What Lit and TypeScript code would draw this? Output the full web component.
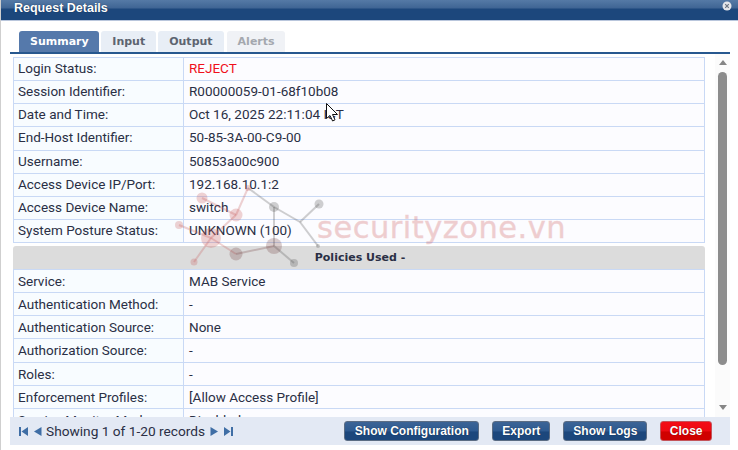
import { LitElement, html, css, svg } from "lit";
import { customElement } from "lit/decorators.js";

const first: [string, string, boolean?][] = [
  ["Login Status:", "REJECT", true],
  ["Session Identifier:", "R00000059-01-68f10b08"],
  ["Date and Time:", "Oct 16, 2025 22:11:04 ICT"],
  ["End-Host Identifier:", "50-85-3A-00-C9-00"],
  ["Username:", "50853a00c900"],
  ["Access Device IP/Port:", "192.168.10.1:2"],
  ["Access Device Name:", "switch"],
  ["System Posture Status:", "UNKNOWN (100)"],
];
const second: [string, string][] = [
  ["Service:", "MAB Service"],
  ["Authentication Method:", "-"],
  ["Authentication Source:", "None"],
  ["Authorization Source:", "-"],
  ["Roles:", "-"],
  ["Enforcement Profiles:", "[Allow Access Profile]"],
  ["Service Monitor Mode:", "Disabled"],
];

const nodes: [number, number, number, string][] = [
  [202, 198, 5.5, "p"], [236, 215, 6.5, "p"], [248, 188, 3, "p"], [274, 207, 5, "g"],
  [319, 204, 4.5, "g"], [318, 246, 2, "g"], [274, 246, 8, "b"], [236, 254, 6.5, "b"],
  [294, 263, 4, "g"], [194, 262, 3.5, "p"], [211, 238, 10, "p"], [179, 225, 4, "p"],
];
const edges: [number, number, number, number, string][] = [
  [202, 198, 236, 215, "p"], [236, 215, 248, 188, "p"], [248, 188, 274, 207, "g"],
  [274, 207, 300, 222, "g"], [274, 207, 274, 246, "g"], [300, 222, 319, 204, "g"],
  [300, 222, 318, 246, "g"], [236, 215, 211, 238, "p"], [179, 225, 211, 238, "p"],
  [211, 238, 194, 262, "p"], [211, 238, 236, 254, "p"], [236, 254, 274, 246, "b"],
  [274, 246, 294, 263, "g"],
];

@customElement("app-root")
export class AppRoot extends LitElement {
  static styles = css`
    :host { display: block; width: 738px; height: 450px; overflow: hidden; position: relative; background: #fff;
      font-family: Roboto, sans-serif; font-size: 13.5px; color: #2a2f45; }
    .dialog { display: flex; flex-direction: column; height: 450px; box-sizing: border-box; border-left: 1px solid #cfcfcf; }
    .title { height: 21px; box-sizing: border-box; flex: none; display: flex; align-items: flex-start; justify-content: space-between;
      background: linear-gradient(#557aa6 0, #3f6594 8px, #1c477c 9px, #1c477c 100%); border-bottom: 1px solid #b9c6dc;
      padding: 1px 6px 0 13px; color: #fff; font: bold 12.5px/14px "Liberation Sans", sans-serif; text-shadow: 0 0 1px #0a2340; }
    .x { display: block; }
    .main { flex: 1; display: flex; flex-direction: column; padding: 10px 8px 5px 9px; min-height: 0; }
    .tabs { display: flex; gap: 2px; padding-left: 9px; border-bottom: 2px solid #27588f; height: 21px; flex: none; }
    .tab { height: 21px; box-sizing: border-box; padding: 0 11px; border-radius: 3px 3px 0 0; background: #e8eef6; color: #5d6470;
      font: bold 11px/21px "DejaVu Sans", sans-serif; }
    .tab.on { background: #5579ab; color: #fff; padding-right: 10.6px; }
    .tab.off { background: #f0f2f6; color: #a4a8ae; margin-left: 1px; padding-right: 10.5px; }
    .content { flex: 1; min-height: 0; display: flex; overflow: hidden; background: #fff; }
    .sheet { width: 692px; margin: 3px 0 0 3px; flex: none; }
    .block { border-top: 1px solid #c9d9f5; border-left: 1px solid #c9d9f5; border-right: 1px solid #c9d9f5; margin-bottom: 3px; }
    .block.low { border-top: 0; }
    .block.low .row { line-height: 22px; }
    .row { display: grid; grid-template-columns: 170px 1fr; height: 23.125px; box-sizing: border-box; border-bottom: 1px solid #c9d9f5; line-height: 20px; }
    .l { background: #f8fcff; padding-left: 4px; border-right: 1px solid #c9d9f5; white-space: nowrap; }
    .v { background: #fcfcff; padding-left: 5px; white-space: nowrap; }
    .red { color: #f0101c; }
    .head { height: 24px; background: #dcdcdc; border-radius: 3px 3px 0 0; text-align: center; font: bold 11px/24px "DejaVu Sans", sans-serif;
      border-bottom: 1px solid #c9d9f5; box-sizing: border-box; color: #2a2f45; padding-left: 2px; }
    .bar { margin-left: 10px; width: 15px; flex: none; background: #fbfbfb; display: flex; flex-direction: column; align-items: center; }
    .up { width: 0; height: 0; border: 4.5px solid transparent; border-top: 0; border-bottom: 5px solid #858585; margin-top: 6px; }
    .thumb { width: 9px; height: 293px; border-radius: 5px; background: #8c8c8c; margin-top: 7px; }
    .down { width: 0; height: 0; border: 4.5px solid transparent; border-bottom: 0; border-top: 5px solid #858585; margin-top: 40px; }
    .foot { height: 28px; flex: none; background: #e3e9f4; display: flex; align-items: center; justify-content: space-between; padding: 0 18px 0 9px; }
    .pager { display: flex; align-items: center; gap: 4px; font-size: 13.7px; }
    .pager svg { display: block; }
    .gap1 { margin-left: 1px; }
    .gap2 { margin-left: 2px; }
    .btns { display: flex; gap: 13px; }
    .btn { height: 20px; box-sizing: border-box; border: 1px solid #5c6d84; border-radius: 3px; padding: 0 9px; color: #fff;
      font: bold 12px/18px "Liberation Sans", sans-serif; background: linear-gradient(#3c6496 0, #2e5a90 50%, #1c477c 55%, #1c477c 100%); text-shadow: 0 0 1px #0a2340; }
    .btn.wide { padding: 0 9.5px; }
    .btn.close { background: linear-gradient(#f30d17 0, #ee0a12 50%, #d00000 55%, #d00000 100%); border-color: #c4545a; padding: 0 8.5px; text-shadow: 0 0 1px #700; }
    .mark { position: absolute; left: 0; top: 0; width: 738px; height: 450px; pointer-events: none; }
    .mark text { font-family: "DejaVu Sans", sans-serif; font-size: 30.5px; letter-spacing: .5px; fill: #c84a4a; opacity: .26; stroke: #c84a4a; stroke-width: .4px; }
  `;

  private rows(list: [string, string, boolean?][]) {
    return list.map(([k, v, red]) => html`<div class="row"><div class="l">${k}</div><div class="v ${red ? "red" : ""}">${v}</div></div>`);
  }

  render() {
    const col: Record<string, string> = { p: "#c86060", g: "#555555", b: "#7a4a4a" };
    return html`
      <div class="dialog">
        <div class="title">
          <span>Request Details</span>
          <svg class="x" width="10" height="10" viewBox="0 0 10 10"><circle cx="5" cy="5" r="4.5" fill="#e4e6ea"/><path d="M3.2 3.2l3.6 3.6M6.8 3.2l-3.6 3.6" stroke="#6b7480" stroke-width="1.2"/></svg>
        </div>
        <div class="main">
          <div class="tabs">
            <div class="tab on">Summary</div><div class="tab">Input</div><div class="tab">Output</div><div class="tab off">Alerts</div>
          </div>
          <div class="content">
            <div class="sheet">
              <div class="block">${this.rows(first)}</div>
              <div class="head">Policies Used -</div>
              <div class="block low">${this.rows(second)}</div>
            </div>
            <div class="bar"><div class="up"></div><div class="thumb"></div><div class="down"></div></div>
          </div>
          <div class="foot">
            <div class="pager">
              <svg width="9" height="9" viewBox="0 0 9 9"><path d="M0 0h2v9H0zM9 0v9L2.5 4.5z" fill="#3f6ea5"/></svg>
              <svg class="gap2" width="8" height="9" viewBox="0 0 8 9"><path d="M7.5 0v9L0 4.5z" fill="#3f6ea5"/></svg>
              <span>Showing 1 of 1-20 records</span>
              <svg class="gap1" width="8" height="9" viewBox="0 0 8 9"><path d="M.5 0v9L8 4.5z" fill="#3f6ea5"/></svg>
              <svg class="gap2" width="9" height="9" viewBox="0 0 9 9"><path d="M9 0H7v9h2zM0 0v9l6.5-4.5z" fill="#3f6ea5"/></svg>
            </div>
            <div class="btns">
              <div class="btn wide">Show Configuration</div><div class="btn">Export</div><div class="btn">Show Logs</div><div class="btn close">Close</div>
            </div>
          </div>
        </div>
      </div>
      <svg class="mark" viewBox="0 0 738 450">
        ${edges.map(([a, b, c, d, k]) => svg`<line x1=${a} y1=${b} x2=${c} y2=${d} stroke=${col[k]} stroke-width="2" opacity=".28"/>`)}
        ${nodes.map(([x, y, r, k]) => svg`<circle cx=${x} cy=${y} r=${r} fill=${col[k]} opacity=".28"/>`)}
        <text x="317" y="238">securityzone.vn</text>
        <path d="M326.5 103.5v15l3.5-3 2.6 5.5 2.4-1.2-2.5-5.3h5z" fill="#fff" stroke="#111" stroke-width="1"/>
      </svg>
    `;
  }
}
